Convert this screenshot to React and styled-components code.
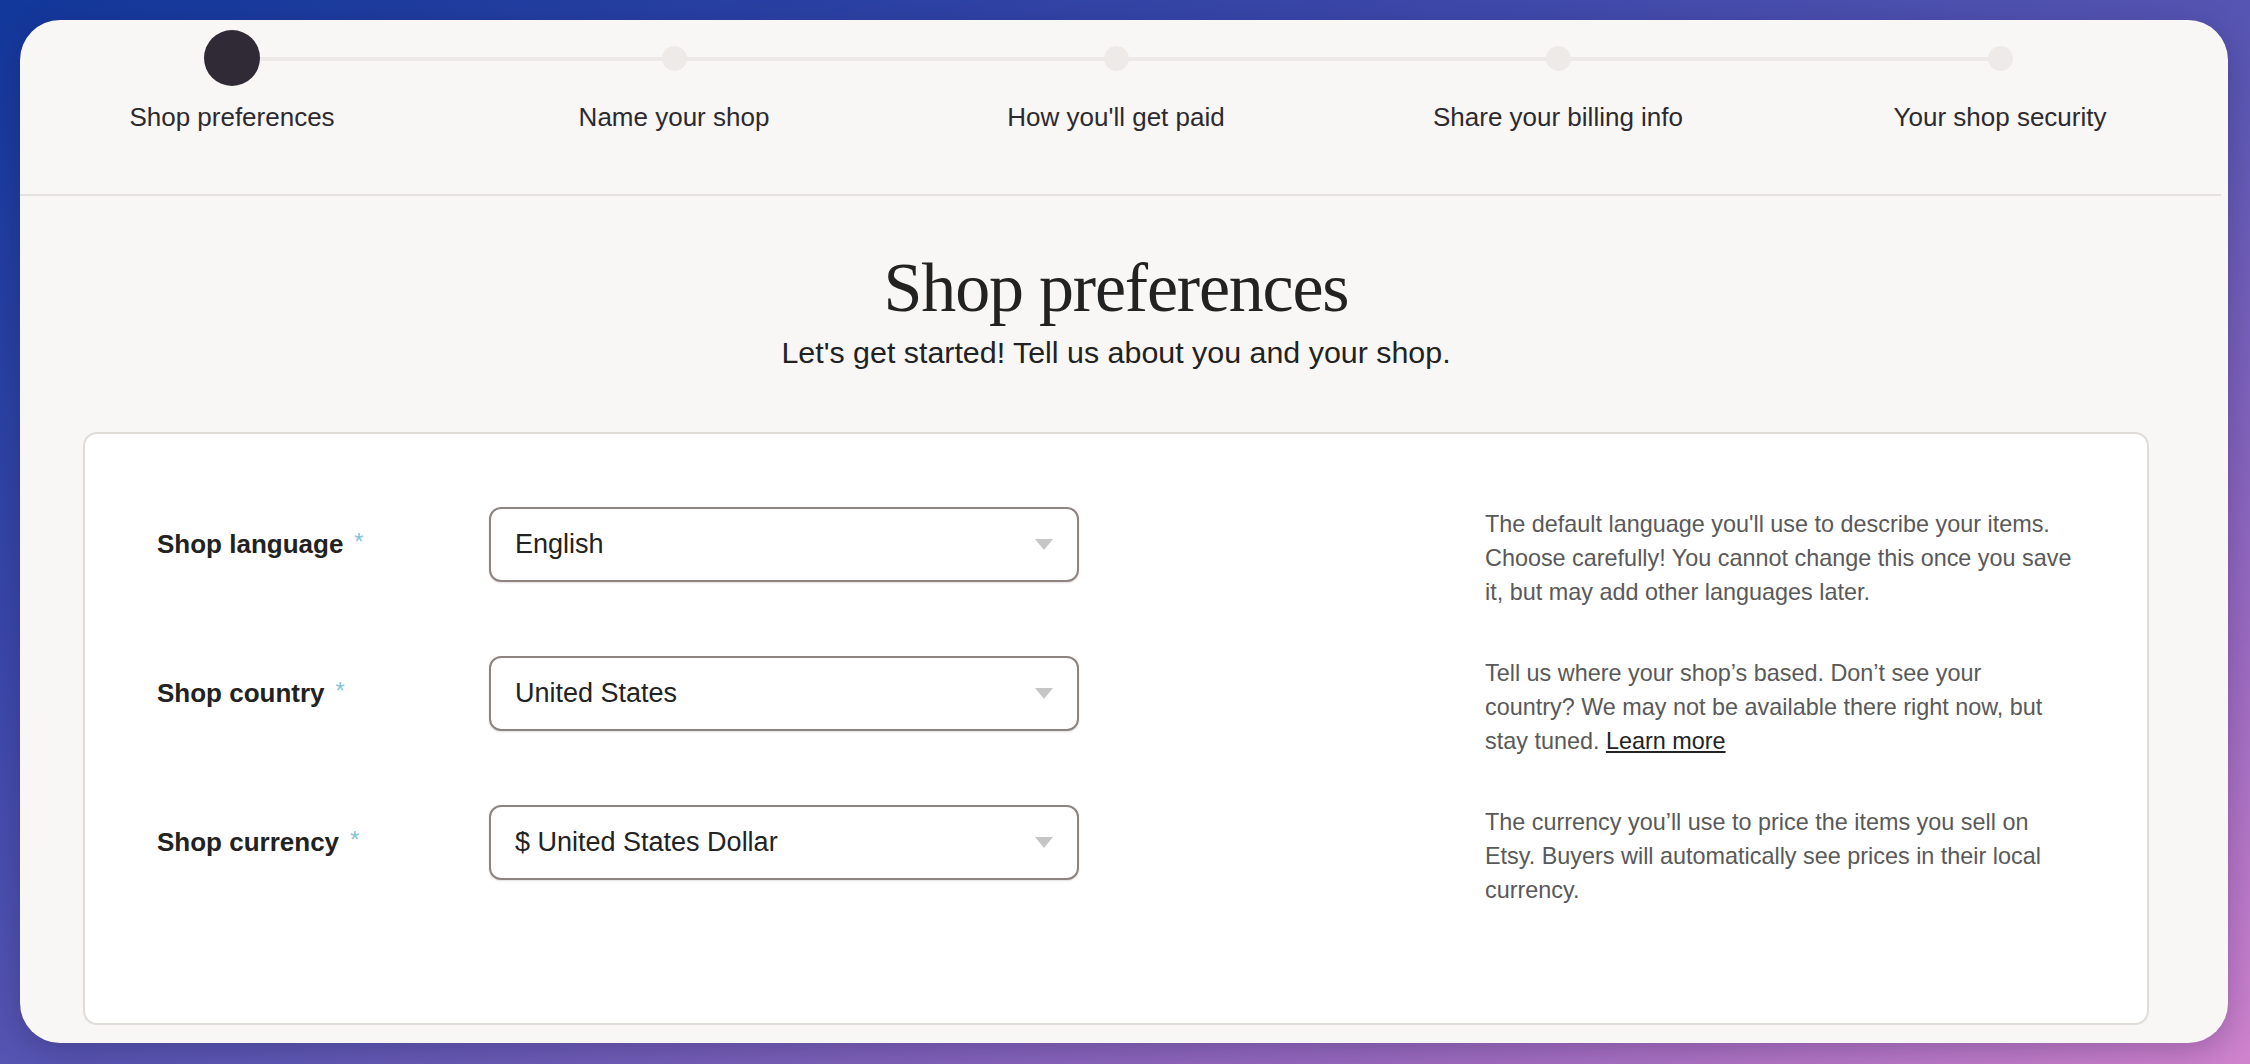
import React from "react";
import styled, { createGlobalStyle } from "styled-components";

const Global = createGlobalStyle`
  html, body {
    margin: 0;
    padding: 0;
    width: 2250px;
    height: 1064px;
    overflow: hidden;
  }
  body {
    font-family: "Liberation Sans", Arial, sans-serif;
    background: linear-gradient(to bottom right, #12389b 0%, #3a47a9 30%, #5d58b4 55%, #9a6ac0 80%, #d083cd 100%);
  }
  * { box-sizing: border-box; }
`;

const Window = styled.div`
  margin: 20px 0 0 20px;
  width: 2208px;
  height: 1023px;
  border-radius: 40px;
  background: #f8f7f5;
  overflow: hidden;
  padding-right: 7px;
  box-shadow: 0 8px 30px rgba(20, 10, 60, 0.25);
  display: flex;
  flex-direction: column;
`;

const Header = styled.header`
  padding: 10px 9px 61px 0;
  border-bottom: 2px solid #e5e2dd;
  display: flex;
  justify-content: center;
`;

const Steps = styled.ol`
  list-style: none;
  margin: 0;
  padding: 0;
  display: grid;
  grid-template-columns: repeat(5, 442px);
`;

const Step = styled.li`
  position: relative;
  display: flex;
  flex-direction: column;
  align-items: center;

  &:not(:last-child)::after {
    content: "";
    position: absolute;
    left: 50%;
    width: 100%;
    top: 27px;
    height: 4px;
    background: #ede9e6;
    z-index: 0;
  }
`;

const MarkerSlot = styled.div`
  height: 56px;
  display: flex;
  align-items: center;
  justify-content: center;
  position: relative;
  z-index: 1;
`;

const Marker = styled.span`
  display: block;
  width: ${(p) => (p.$active ? "56px" : "25px")};
  height: ${(p) => (p.$active ? "56px" : "25px")};
  border-radius: 50%;
  background: ${(p) => (p.$active ? "#302a37" : "#eeeae8")};
`;

const StepLabel = styled.span`
  margin-top: 15px;
  font-size: 26px;
  line-height: 32px;
  color: #2c2a30;
  white-space: nowrap;
`;

const Body = styled.main`
  padding: 50px 72px 0 63px;
  display: flex;
  flex-direction: column;
  align-items: stretch;
`;

const Title = styled.h1`
  margin: 0;
  text-align: center;
  font-family: "Liberation Serif", "Times New Roman", serif;
  font-weight: 400;
  font-size: 70px;
  line-height: 84px;
  letter-spacing: -1.2px;
  color: #222222;
`;

const Subtitle = styled.p`
  margin: 4px 0 0;
  text-align: center;
  font-size: 30.4px;
  line-height: 36px;
  color: #222222;
`;

const FormCard = styled.section`
  margin-top: 62px;
  height: 593px;
  background: #ffffff;
  border: 2px solid #e0ddd9;
  border-radius: 14px;
  padding: 73px 72px 0 72px;
  display: flex;
  flex-direction: column;
  gap: 47px;
`;

const Row = styled.div`
  display: grid;
  grid-template-columns: 332px 590px 1fr 590px;
  align-items: start;
`;

const LabelCell = styled.div`
  height: 75px;
  display: flex;
  align-items: center;
`;

const Label = styled.label`
  font-size: 26px;
  font-weight: 700;
  color: #222222;
  white-space: nowrap;
`;

const Required = styled.span`
  margin-left: 11px;
  font-size: 24px;
  font-weight: 400;
  color: #86c3d8;
  position: relative;
  top: -3px;
`;

const SelectBox = styled.div`
  grid-column: 2;
  height: 75px;
  border: 2px solid #8e8581;
  border-radius: 12px;
  background: #ffffff;
  box-shadow: 0 1px 2px rgba(0, 0, 0, 0.12);
  padding: 0 24px 0 24px;
  display: flex;
  align-items: center;
  justify-content: space-between;
  font-size: 27px;
  color: #222222;
`;

const Caret = styled.span`
  width: 0;
  height: 0;
  border-left: 9px solid transparent;
  border-right: 9px solid transparent;
  border-top: 11px solid #c6c6c6;
`;

const Help = styled.p`
  grid-column: 4;
  margin: 0;
  font-size: 23.4px;
  line-height: 34px;
  color: #595959;
`;

const Link = styled.a`
  color: #222222;
  text-decoration: underline;
  text-underline-offset: 2px;
`;

const steps = [
  "Shop preferences",
  "Name your shop",
  "How you'll get paid",
  "Share your billing info",
  "Your shop security",
];

const fields = [
  {
    label: "Shop language",
    value: "English",
    help: <>The default language you'll use to describe your items. Choose carefully! You cannot change this once you save it, but may add other languages later.</>,
  },
  {
    label: "Shop country",
    value: "United States",
    help: (
      <>
        Tell us where your shop’s based. Don’t see your country? We may not be available there right now, but stay tuned.{" "}
        <Link href="#">Learn more</Link>
      </>
    ),
  },
  {
    label: "Shop currency",
    value: "$ United States Dollar",
    help: <>The currency you’ll use to price the items you sell on Etsy. Buyers will automatically see prices in their local currency.</>,
  },
];

export default function App() {
  return (
    <>
      <Global />
      <Window>
        <Header>
          <Steps>
            {steps.map((s, i) => (
              <Step key={s}>
                <MarkerSlot>
                  <Marker $active={i === 0} />
                </MarkerSlot>
                <StepLabel>{s}</StepLabel>
              </Step>
            ))}
          </Steps>
        </Header>
        <Body>
          <Title>Shop preferences</Title>
          <Subtitle>Let's get started! Tell us about you and your shop.</Subtitle>
          <FormCard>
            {fields.map((f) => (
              <Row key={f.label}>
                <LabelCell>
                  <Label>
                    {f.label}
                    <Required>*</Required>
                  </Label>
                </LabelCell>
                <SelectBox>
                  <span>{f.value}</span>
                  <Caret />
                </SelectBox>
                <Help>{f.help}</Help>
              </Row>
            ))}
          </FormCard>
        </Body>
      </Window>
    </>
  );
}
